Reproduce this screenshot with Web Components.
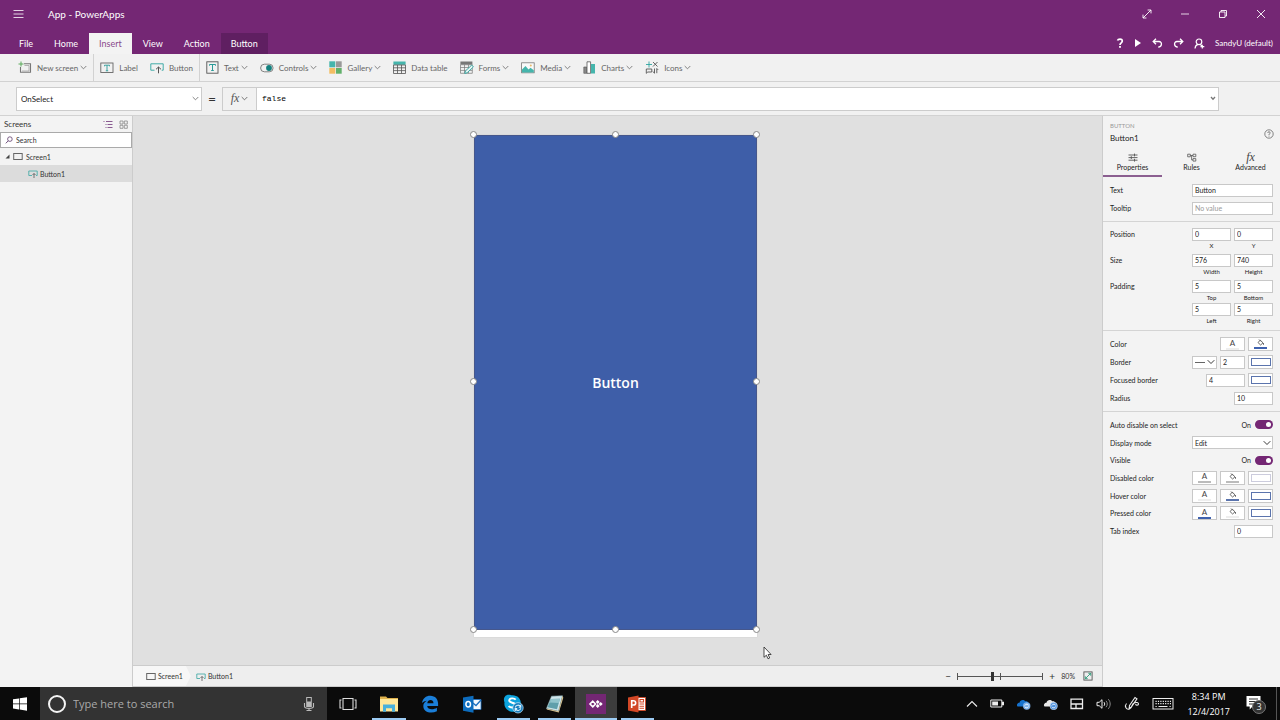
<!DOCTYPE html>
<html lang="en">
<head>
<meta charset="utf-8">
<title>App - PowerApps</title>
<style>
  html, body { margin: 0; height: 100%; }
  body { font-family: Lato, "Open Sans", sans-serif; font-size: 8px; color: #333; background: #f3f3f3; overflow: hidden; }
</style>
</head>
<body>
<power-studio></power-studio>
<script>
const base = `
  *, *::before, *::after { box-sizing: border-box; }
  button, input, select { font: inherit; color: inherit; margin: 0; border: 0; border-radius: 0; background: none; padding: 0; outline: 0; }
  button { display: flex; align-items: center; justify-content: center; }
  select { appearance: none; }
  a { color: inherit; text-decoration: none; display: flex; align-items: center; }
`;

function define(tag, css, html) {
  customElements.define(tag, class extends HTMLElement {
    connectedCallback() {
      if (this.shadowRoot) return;
      const root = this.attachShadow({ mode: 'open' });
      root.innerHTML = `<style>${base}${css}</style>${typeof html === 'function' ? html(this) : html}`;
    }
  });
}

/* name: [width, height, markup] */
const N = 'fill="none"';
const S = 'fill="none" stroke="currentColor"';
const icons = {
  menu: [11, 10, `<path ${S} stroke-width=".8" d="M.5 1.500h10M.5 5h10M.5 8.500h10"/>`],
  expand: [10, 10, `<path ${S} stroke-width=".9" d="M1 9l8-8M5.600 1H9v3.400M1 5.600V9h3.400"/>`],
  minimize: [10, 10, `<path ${S} stroke-width=".8" d="M1 5h8"/>`],
  restore: [10, 10, `<path ${S} stroke-width=".9" d="M1.500 3h5.500v5.500h-5.500zM3 3V1.500h5.500v5.500H7"/>`],
  close: [10, 10, `<path ${S} stroke-width=".9" d="M1 1l8 8M9 1l-8 8"/>`],
  help: [8, 10, `<path ${S} stroke-width="1.700" d="M1.500 2.400C2 .9 6.300.3 6.300 3 6.300 5 4 4.700 4 7"/><rect x="3.100" y="8" width="1.800" height="1.800" fill="currentColor"/>`],
  play: [8, 10, `<path fill="currentColor" d="M1 1l6 4-6 4z"/>`],
  undo: [11, 10, `<path ${S} stroke-width="1.300" d="M4 .8L1.200 3.500 4 6.200M1.400 3.500H7c3.400.2 3.400 5.300-.8 5.600"/>`],
  redo: [11, 10, `<path ${S} stroke-width="1.300" d="M7 .8l2.800 2.700L7 6.200M9.600 3.500H4C.6 3.700.6 8.800 4.800 9.100"/>`],
  user: [11, 11, `<circle ${S} stroke-width="1.200" cx="5" cy="3.800" r="2.800"/><path ${S} stroke-width="1.200" d="M1 10.500c.2-2.400 1.200-3.600 3-4.100M6.300 6.500l1.500 1.300M8.300 6.800v3.600M6.500 8.600h3.800"/>`],
  chev: [7, 5, `<path ${S} stroke-width=".8" d="M.7 1l2.800 2.800L6.300 1"/>`],
  chevBig: [8, 6, `<path ${S} stroke-width=".9" d="M.7 1.200L4 4.500l3.300-3.300"/>`],
  chevBold: [6, 5, `<path ${N} stroke="#777" stroke-width="1.300" d="M1 1l2 2.200L5 1"/>`],
  newScreen: [14, 13, `<path ${N} stroke="#777" stroke-width="1.100" d="M6 2.800h6.500v8.500H2.500V6"/><path ${N} stroke="#999" stroke-width=".7" d="M6.500 4.500h4.500v5.500H4"/><path ${N} stroke="#5aaa5a" d="M3 .5v5M.5 3h5"/>`],
  label: [14, 12, `<rect ${N} stroke="#666" stroke-width=".9" x=".8" y="1" width="12.200" height="9.500"/><path ${N} stroke="#2b9b98" stroke-width=".9" d="M4.500 4.300V3.200h5v1.100M7 3.200v5.600M5.800 8.800h2.400"/>`],
  button: [14, 12, `<path ${N} stroke="#2fa5a0" stroke-width=".9" d="M4.500 8.200H.8V1.800h12.400v6.400h-1.500"/><path ${N} stroke="#555" stroke-width="1" d="M8.500 11.300V5M6 7.300L8.500 5 11 7.300"/>`],
  text: [13, 13, `<rect ${N} stroke="#555" stroke-width=".9" x=".8" y=".8" width="11.200" height="11.400"/><path ${N} stroke="#2b9b98" d="M3.500 4.700V3.500h6v1.200M6.500 3.500v6M5.200 9.500h2.600"/>`],
  controls: [14, 10, `<rect ${N} stroke="#666" stroke-width=".8" x=".6" y="1.200" width="12.500" height="7.600" rx="3.800"/><circle cx="9" cy="5" r="2.900" fill="#12807e"/>`],
  gallery: [13, 13, `<path fill="#45b5ac" d="M.3.3h6v6h-6z"/><path fill="#999" d="M7 .3h5.700v6H7z"/><path fill="#f3bd62" d="M.3 7h6v5.700h-6z"/><path fill="#62b06a" d="M7 7h5.700v5.700H7z"/>`],
  table: [13, 13, `<path fill="#45b5ac" d="M.4.5h12.200v3.300H.4z"/><path ${N} stroke="#555" stroke-width=".8" d="M.5 4h12v8.500H.5zM.5 6.800h12M.5 9.600h12M4.500 4v8.500M8.500 4v8.500"/>`],
  forms: [14, 13, `<path fill="#777" d="M.4.5h12v3H.4z"/><path ${N} stroke="#777" stroke-width=".7" d="M.5 3.700h11.800v8.600H.5zM.5 6.500h11.800M.5 9.400h11.800M4.500 3.700v8.600M8.500 3.700v8.600"/><path fill="#e8f4f3" stroke="#2fa5a0" stroke-width=".9" d="M4.800 12.500l.7-2.600 6.200-5.800 1.700 1.800-6.200 5.800z"/>`],
  media: [14, 12, `<rect fill="#fafafa" stroke="#777" stroke-width=".8" x=".6" y=".8" width="12.600" height="10"/><path fill="#45b5ac" d="M1 10.500V7.500L4.500 4l3 3.500 2-1.700 3.300 2.500v2.200z"/><circle cx="9.800" cy="3.500" r="1" fill="#e9b96a"/>`],
  charts: [13, 13, `<path fill="#888" stroke="#555" stroke-width=".6" d="M.8 6h3v6.300h-3z"/><path fill="#fff" stroke="#555" stroke-width=".8" d="M4 .8h3.600v11.500H4z"/><path fill="#45b5ac" d="M8 3h4v9.500H8z"/>`],
  shapes: [14, 13, `<path ${N} stroke="#2fa5a0" stroke-width=".9" d="M4 .5v6M1 3.500h6"/><path ${N} stroke="#555" stroke-width=".9" d="M8 1l4.500 4.500M12.500 1L8 5.500M1.300 8h5.500v3h-4l-1.500 1.300zM9.500 7.500v4.700M7.800 10.500l1.700 1.700M11.800 12.200V7.500l1.400 1.400"/>`],
  list: [10, 9, `<path ${N} stroke="#7e4a86" stroke-width=".9" d="M3 1.500h6.500M4.500 4.500h5M4.500 7.500h5M.5 1.500h1M2.500 4.500h1M2.500 7.500h1"/>`],
  grid: [9, 9, `<path ${N} stroke="#888" stroke-width=".8" d="M1 1h3v3H1zM5.300 1h3v3h-3zM1 5.300h3v3H1zM5.300 5.300h3v3h-3z"/>`],
  search: [8, 8, `<circle ${N} stroke="#5d3a6b" stroke-width=".8" cx="4.900" cy="3.100" r="2.300"/><path ${N} stroke="#5d3a6b" stroke-width=".9" d="M3.200 4.900L.8 7.300"/>`],
  caret: [5, 5, `<path fill="#444" d="M4.500.5v4h-4z"/>`],
  screen: [10, 9, `<rect ${N} stroke="#666" x=".7" y="1.500" width="8.500" height="6"/>`],
  btnSmall: [10, 9, `<path ${N} stroke="#4aada8" stroke-width=".9" d="M4 6.500H.8V2h8.400v4.500H8"/><path ${N} stroke="#555" stroke-width=".8" d="M6 9V4.500M4.500 6L6 4.500 7.500 6"/>`],
  info: [10, 10, `<circle ${S} stroke-width=".7" cx="5" cy="5" r="4.200"/><path ${S} stroke-width=".8" d="M3.600 3.900c.2-1.500 2.800-1.300 2.600.1C6 5 5 4.700 5 5.900M5 6.700v.8"/>`],
  sliders: [10, 9, `<path ${S} stroke-width=".9" d="M.5 2h9M.5 4.600h9M.5 7.200h9M6.500.6v2.800M3.300 3.200V6M6.500 5.800v2.800"/>`],
  rules: [10, 9, `<path ${S} stroke-width=".8" d="M.7 1.200h2.600v2.600H.7zM6 1.200h2.800v2.500H6zM6 5.600h2.800v2.500H6zM3.300 2.500H6M4.600 2.500v4.400H6"/>`],
  fill: [9, 7, `<path ${S} stroke-width=".8" d="M2 3.500L4.300 1.200 7 3.800 4.600 6zM3 .5l1.800 1.800M7.500 4v1.800"/>`],
  fit: [10, 10, `<rect ${N} stroke="#555" stroke-width=".9" x=".9" y=".9" width="8.200" height="8.200"/><path ${N} stroke="#2b9b78" stroke-width=".9" d="M2.300 7.700l5.400-5.400M5.300 2.300h2.400v2.400M2.300 5.300v2.400h2.400"/>`],
  pointer: [9, 14, `<path fill="#fff" stroke="#222" stroke-width=".8" d="M1 1v10.300l2.400-2.100 1.600 3.600 1.700-.8-1.600-3.500h3z"/>`],
  windows: [16, 16, `<path fill="#fff" d="M1 3.300l6-.9v5.200H1zM7.700 2.300L15 1.200v6.400H7.700zM1 8.300h6v5.200l-6-.9zM7.700 8.300H15v6.400l-7.300-1.100z"/>`],
  ring: [20, 20, `<circle ${N} stroke="#f4f4f4" stroke-width="2" cx="10" cy="10" r="8"/>`],
  mic: [12, 16, `<rect ${N} stroke="#bbb" x="3.700" y="1.500" width="4.600" height="9"/><path fill="#bbb" d="M4 5.500h4v5H4z"/><path ${N} stroke="#bbb" stroke-width="1.100" d="M1.500 7v3.500c0 2.500 9 2.500 9 0V7M6 12.500v2.200M3.500 14.500h5"/>`],
  taskview: [18, 14, `<path ${N} stroke="#ddd" stroke-width="1.100" d="M4 1.500h10v11H4zM2.500 3H1v8h1.500M15.500 3H17v8h-1.500"/>`],
  folder: [20, 18, `<path fill="#dfb24d" d="M1 1.500h6l1.500 1.500H19v5H1z"/><path fill="#ffe79a" d="M1 4h18v12.500H1z"/><path fill="#48b0dc" d="M4 16.800V9.500h12v7.300h-3v-3.500H7v3.500z"/>`],
  edge: [18, 18, `<path fill="#1b7fd9" d="M1 8C1.600 3.300 5 .7 9.300.7c5 0 7.800 3.600 7.800 8V11H6.200c.2 4 6.300 4 9.700 1.800v3.400C10 19.200 2.300 17.200 2.300 10.900c0-2.300 1.400-4.100 3.500-5.200C3.800 5.900 2 6.700 1 8zm5.300.2h6.200C12.500 4 6.700 4.200 6.300 8.200z"/>`],
  outlook: [20, 18, `<path fill="#f4f8fc" stroke="#1c6fc0" stroke-width=".8" d="M9 4.500h10v10H9z"/><path ${N} stroke="#1c6fc0" stroke-width="1.300" d="M9 6.500l5 4L19 5"/><path fill="#0d6cbd" d="M1 2.500L11.500.7v17L1 15.800z"/><ellipse ${N} stroke="#fff" stroke-width="1.500" cx="6.200" cy="9.300" rx="2.300" ry="2.800"/>`],
  skype: [21, 20, `<path fill="#0da3dd" d="M5.500.7c2 0 2.600.6 4 .6 6 0 9.300 5 8 9.500 1.700 4.500-2 8.500-6.500 6.900C5 18.500.6 13.500 1.500 8.500-.2 4.500 2 .7 5.500.7z"/><path ${N} stroke="#fff" stroke-width="1.900" d="M12.700 5.600C11 3.700 6 4 6.200 6.700 6.500 9.300 12.300 8.200 12.500 11.200c.1 2.800-5.300 3-6.800.7"/><circle cx="15" cy="13.800" r="5.200" fill="#167dbd" stroke="#c7e5f6" stroke-width=".7"/><path ${N} stroke="#d9f0fb" stroke-width="1.100" d="M12.300 13.500c.4-3 4.300-3 5.200-.6M17.700 14.200c-.4 3-4.300 3-5.200.6M17.700 10.700v2.500h-2M12.200 17v-2.400h2"/>`],
  notepad: [20, 18, `<path fill="#cfe5ea" stroke="#86a9b1" stroke-width=".6" d="M6.500 1.200l11-.4-4 15.400L1.500 13.500z"/><path fill="#5f9fab" d="M6 4l9-.3-3 10.500-9.500-2z"/><path fill="#91c4cc" d="M6 4l9-.3-1.200 4.400-9-.6z"/><path fill="#d5c08f" d="M1.500 13.500l12 2.700.3 1.200-12-3zM17.500.8l.8 2-4.500 14.600-.3-1.200z"/>`],
  powerapps: [20, 20, `<path fill="#742774" d="M0 0h20v20H0z"/><path ${N} stroke="#fff" stroke-width="1.600" d="M6.800 7.200L9.500 10l-2.700 2.800L4 10z"/><path fill="#fff" d="M11.700 5.900l2 2-2 2-2-2zM11.700 10.100l2 2-2 2-2-2zM14.700 8l2 2-2 2-2-2z"/>`],
  powerpoint: [20, 18, `<path fill="#fff" stroke="#d24726" stroke-width=".9" d="M9 2.500h9.500v13H9z"/><path ${N} stroke="#d24726" stroke-width="1.100" d="M12.500 9h4.500M12.500 11.200h4.500M12.500 13.200h4.500M13 4.500h3.500v2.500H13z"/><path fill="#d24726" d="M1 2.500L11.500.6v17L1 15.600z"/><path ${N} stroke="#fff" stroke-width="1.600" d="M4.700 13V5.800h1.500c3.300 0 3.300 4.200 0 4.200H4.700"/>`],
  up: [12, 8, `<path ${S} stroke-width="1.100" d="M1 6.500l5-5 5 5"/>`],
  battery: [14, 9, `<path ${S} d="M.8 1h11v7h-11zM12.500 3h1v3h-1z"/><path fill="currentColor" d="M2.200 2.500H8v4H2.200z"/>`],
  cloudBlue: [15, 12, `<path fill="#1672cd" d="M1.500 8.500C0 6.500 2 4.500 3.500 4.700 4 2 7.500 1 9.300 3.300c2.700-.6 4.300 2 3.200 5.200z"/><circle cx="10.700" cy="8" r="3.700" fill="#7fb2ea"/><path ${N} stroke="#fff" stroke-width=".9" d="M8.800 7.500c1-1.800 3-1.500 3.800-.3M12.600 8.700c-1 1.600-3 1.300-3.800.1"/>`],
  cloudWhite: [15, 12, `<path fill="#e8e8e8" d="M1.500 8.500C0 6.500 2 4.500 3.500 4.700 4 2 7.500 1 9.300 3.300c2.700-.6 4.300 2 3.200 5.200z"/><circle cx="10.700" cy="8" r="3.700" fill="#4f93e0" stroke="#dfe9f5" stroke-width=".6"/><path ${N} stroke="#fff" stroke-width=".9" d="M8.800 7.500c1-1.800 3-1.500 3.800-.3M12.600 8.700c-1 1.600-3 1.300-3.800.1"/>`],
  network: [14, 12, `<path ${S} stroke-width="1.300" d="M1 1.200h11.500v9.300H1zM1 6h11.500M6 6v4.500"/>`],
  speaker: [16, 12, `<path ${S} stroke-width="1" d="M1 4.300h2.200L6 1.700v8.600L3.200 7.700H1zM8 4.200c.9 1 .9 2.600 0 3.600"/><path ${N} stroke="#999" stroke-width=".9" d="M10 2.800c1.700 1.900 1.700 4.500 0 6.400M12.300 1.200c2.500 2.800 2.500 6.800 0 9.600"/>`],
  pen: [16, 15, `<path ${S} stroke-width="1.100" d="M5.500 9.500l5.500-8 2 1.400-5.500 8-2.300 1zM2.500 7.500c-2.500 3 0 6.500 3 5.500s2-5 4.500-6 4.500-.5 4.500 1-2.500 1.500-3 .2"/>`],
  keyboard: [22, 13, `<rect ${S} x="1" y="1.500" width="20" height="10.500"/><path ${S} stroke-width="1.200" stroke-dasharray="1.200 1.200" d="M3.500 4.300h15.500M3.500 6.700h15.500"/><path ${S} stroke-width="1.200" d="M3.500 9.500h1.200M6.500 9.500h9M17.500 9.500h1.200"/>`],
  note: [15, 15, `<path fill="#fff" d="M.5 1h14v10.500H6.500l-2.800 3v-3H.5z"/><path ${N} stroke="#333" stroke-width="1" d="M3 4h9M3 6.500h9M3 9h6"/>`]
};
define('ui-icon', `:host { display: inline-flex; flex: none; } svg { display: block; }`, el => {
  const [w, h, markup] = icons[el.getAttribute('name')];
  return `<svg width="${w}" height="${h}" viewBox="0 0 ${w} ${h}" aria-hidden="true">${markup}</svg>`;
});

define('app-header', `
  :host { display: flex; flex-direction: column; background: #742774; color: #fff; height: 54px; flex: none; }
  .row { display: flex; justify-content: space-between; }
  .title { height: 27px; align-items: center; font-size: 10px; padding: 0 9px 0 13px; }
  .title div { display: flex; align-items: center; gap: 24px; }
  .title .win { gap: 18px; }
  .win button { width: 20px; height: 20px; }
  .tabs { height: 27px; align-items: flex-end; font-size: 9px; }
  nav { display: flex; gap: 1px; padding-left: 9px; }
  nav a { height: 21px; padding: 0 10px; }
  nav a.on { background: #f3f3f3; color: #8a4a8c; }
  nav a.ctx { background: #5f1f61; }
  .tools { display: flex; align-items: center; height: 22px; gap: 10px; padding-right: 7px; font-size: 8px; }
`, `
  <div class="row title">
    <div><button aria-label="Menu"><ui-icon name="menu"></ui-icon></button><span>App - PowerApps</span></div>
    <div class="win">
      <button aria-label="Full screen"><ui-icon name="expand"></ui-icon></button>
      <button aria-label="Minimize"><ui-icon name="minimize"></ui-icon></button>
      <button aria-label="Restore"><ui-icon name="restore"></ui-icon></button>
      <button aria-label="Close"><ui-icon name="close"></ui-icon></button>
    </div>
  </div>
  <div class="row tabs">
    <nav><a href="#file">File</a><a href="#home">Home</a><a href="#insert" class="on">Insert</a><a href="#view">View</a><a href="#action">Action</a><a href="#button" class="ctx">Button</a></nav>
    <div class="tools">
      <button aria-label="Help"><ui-icon name="help"></ui-icon></button>
      <button aria-label="Play"><ui-icon name="play"></ui-icon></button>
      <button aria-label="Undo"><ui-icon name="undo"></ui-icon></button>
      <button aria-label="Redo"><ui-icon name="redo"></ui-icon></button>
      <button aria-label="Share"><ui-icon name="user"></ui-icon></button>
      <span>SandyU (default)</span>
    </div>
  </div>`);

define('ribbon-item', `
  :host { display: flex; }
  button { gap: 5px; color: #666; }
  span { display: flex; align-items: center; gap: 2px; white-space: nowrap; }
`, el => `<button><ui-icon name="${el.getAttribute('icon')}"></ui-icon><span><slot></slot>${el.hasAttribute('menu') ? '<ui-icon name="chev"></ui-icon>' : ''}</span></button>`);

define('ribbon-bar', `
  :host { display: flex; height: 28px; flex: none; background: #f1f1f1; border-bottom: 1px solid #d2d2d2; }
  .group { display: flex; gap: 12px; padding: 0 6px; border-right: 1px solid #d2d2d2; }
  .group:first-of-type { padding-left: 18px; }
  .group:last-of-type { border: 0; }
`, `
  <div class="group"><ribbon-item icon="newScreen" menu>New screen</ribbon-item></div>
  <div class="group"><ribbon-item icon="label">Label</ribbon-item><ribbon-item icon="button">Button</ribbon-item></div>
  <div class="group">
    <ribbon-item icon="text" menu>Text</ribbon-item>
    <ribbon-item icon="controls" menu>Controls</ribbon-item>
    <ribbon-item icon="gallery" menu>Gallery</ribbon-item>
    <ribbon-item icon="table">Data table</ribbon-item>
    <ribbon-item icon="forms" menu>Forms</ribbon-item>
    <ribbon-item icon="media" menu>Media</ribbon-item>
    <ribbon-item icon="charts" menu>Charts</ribbon-item>
    <ribbon-item icon="shapes" menu>Icons</ribbon-item>
  </div>`);

define('formula-bar', `
  :host { display: flex; align-items: center; height: 34px; flex: none; background: #f1f1f1; border-bottom: 1px solid #d2d2d2; padding: 0 61px 0 16px; }
  .box { display: grid; align-items: center; height: 24px; background: #fff; border: 1px solid #ccc; }
  .box > * { grid-area: 1 / 1; }
  .box ui-icon { justify-self: end; margin-right: 2px; pointer-events: none; color: #666; }
  .prop { width: 186px; }
  select { height: 22px; padding-left: 4px; color: #222; }
  .eq { width: 20px; text-align: center; font-size: 14px; }
  .fx { width: 34px; height: 24px; border: 1px solid #ccc; border-right: 0; font: italic 12px "Liberation Serif", serif; color: #555; gap: 2px; }
  .formula { flex: 1; }
  input { height: 22px; padding-left: 5px; font-family: "Liberation Mono", monospace; color: #000; }
`, `
  <div class="box prop"><select aria-label="Property"><option>OnSelect</option></select><ui-icon name="chev"></ui-icon></div>
  <span class="eq">=</span>
  <button class="fx">fx<ui-icon name="chev"></ui-icon></button>
  <div class="box formula"><input aria-label="Formula" value="false"><ui-icon name="chevBold"></ui-icon></div>`);

define('tree-panel', `
  :host { display: flex; flex-direction: column; width: 133px; flex: none; background: #f3f3f3; border-right: 1px solid #ccc; font-size: 7px; }
  header { display: flex; align-items: center; height: 16px; padding: 0 4px; font-size: 8px; gap: 6px; }
  header span { flex: 1; }
  label { display: flex; align-items: center; gap: 3px; height: 16px; padding-left: 4px; background: #fff; border: 1px solid #aaa; }
  input { flex: 1; min-width: 0; }
  input::placeholder { color: #333; opacity: 1; }
  a { height: 17px; gap: 3px; padding-left: 5px; color: #333; }
  a.child { background: #dcdcdc; padding-left: 28px; gap: 2px; }
`, `
  <header><span>Screens</span><button aria-label="List view"><ui-icon name="list"></ui-icon></button><button aria-label="Thumbnail view"><ui-icon name="grid"></ui-icon></button></header>
  <label><ui-icon name="search"></ui-icon><input type="search" aria-label="Search" placeholder="Search"></label>
  <a href="#screen1"><ui-icon name="caret"></ui-icon><ui-icon name="screen"></ui-icon>Screen1</a>
  <a href="#button1" class="child"><ui-icon name="btnSmall"></ui-icon>Button1</a>`);

define('design-canvas', `
  :host { display: flex; justify-content: center; flex: 1; min-height: 0; background: #e0e0e0; padding: 19px 4px 28px 0; }
  .screen { position: relative; height: 100%; aspect-ratio: 640 / 1136; background: #fff; box-shadow: 0 0 1px #bbb; }
  .control { position: relative; width: 100%; height: 98.6%; background: #3e5ea8; color: #fff; font: 600 14px "Open Sans", sans-serif; box-shadow: inset 0 0 0 1px #46578c; }
  i { position: absolute; width: 7px; height: 7px; margin: -4px; border-radius: 50%; background: #fff; border: 1px solid #888; }
  .t { top: 0; } .m { top: 50%; } .b { top: 100%; }
  .l { left: 0; } .c { left: 50%; } .r { left: 100%; }
  .pointer { position: absolute; left: 289px; bottom: -23px; }
`, `
  <div class="screen">
    <button class="control">Button<i class="t l"></i><i class="t c"></i><i class="t r"></i><i class="m l"></i><i class="m r"></i><i class="b l"></i><i class="b c"></i><i class="b r"></i></button>
    <ui-icon class="pointer" name="pointer"></ui-icon>
  </div>`);

define('status-bar', `
  :host { display: flex; justify-content: space-between; height: 22px; flex: none; background: #eee; border-top: 1px solid #ccc; border-bottom: 1px solid #ccc; font-size: 7px; padding-right: 9px; }
  nav, .zoom { display: flex; align-items: center; }
  nav { gap: 5px; }
  nav a { gap: 2px; height: 100%; }
  nav a.first { background: #f7f7f7; padding: 0 8px 0 13px; clip-path: polygon(0 0, calc(100% - 5px) 0, 100% 50%, calc(100% - 5px) 100%, 0 100%); }
  .zoom { gap: 5px; }
  .zoom button { font-size: 10px; width: 8px; }
  .zoom button:last-child { width: 10px; }
  .scale { position: relative; display: flex; width: 86px; height: 9px; background: linear-gradient(#555, #555) 0 4px / 100% 1px no-repeat, linear-gradient(#555, #555) 0 1px / 1px 7px no-repeat, linear-gradient(#555, #555) 100% 1px / 1px 7px no-repeat, linear-gradient(#555, #555) 50% 1px / 1px 7px no-repeat; }
  input { appearance: none; width: 100%; height: 9px; }
  input::-webkit-slider-thumb { appearance: none; width: 3px; height: 9px; background: #333; }
  output { margin-right: 3px; }
`, `
  <nav><a href="#screen1" class="first"><ui-icon name="screen"></ui-icon>Screen1</a><a href="#button1"><ui-icon name="btnSmall"></ui-icon>Button1</a></nav>
  <div class="zoom"><button aria-label="Zoom out">−</button><span class="scale"><input type="range" aria-label="Zoom" value="41"></span><button aria-label="Zoom in">+</button><output>80%</output><button aria-label="Fit"><ui-icon name="fit"></ui-icon></button></div>`);

define('prop-row', `
  :host { display: flex; justify-content: space-between; align-items: center; height: 18px; }
  div { display: flex; align-items: center; gap: 3px; }
`, el => `<span>${el.getAttribute('label')}</span><div><slot></slot></div>`);

define('prop-field', `
  :host { display: block; width: 39px; }
  :host([wide]) { width: 81px; }
  :host([slim]) { width: 25px; }
  label { display: block; }
  input { display: block; width: 100%; height: 13px; background: #fff; border: 1px solid #c8c8c8; padding: 0 2px; color: #222; }
  input::placeholder { color: #999; opacity: 1; }
  span { display: block; height: 9px; line-height: 10px; font-size: 6px; text-align: center; }
`, el => {
  const a = n => el.getAttribute(n) || '';
  return `<label><input aria-label="${a('name')}" value="${a('value')}" placeholder="${a('hint')}">${a('caption') ? `<span>${a('caption')}</span>` : ''}</label>`;
});

define('prop-switch', `
  label { display: flex; align-items: center; gap: 4px; }
  input { appearance: none; display: flex; align-items: center; justify-content: flex-end; width: 18px; height: 9px; border-radius: 5px; background: #742774; padding: 0 2px; }
  input::before { content: ""; width: 5px; height: 5px; border-radius: 50%; background: #fff; }
`, el => `<label>On<input type="checkbox" checked aria-label="${el.getAttribute('name')}"></label>`);

define('prop-swatch', `
  :host { display: block; --swatch: var(--c, #5b74ad); }
  button { flex-direction: column; width: 25px; height: 14px; background: #fff; border: 1px solid #c8c8c8; gap: 1px; line-height: 8px; font-size: 8px; color: #444; }
  u { width: 13px; height: 2px; background: var(--swatch); }
  b { width: 20px; height: 8px; border: 1px solid var(--swatch); }
`, el => {
  const kind = el.getAttribute('kind');
  const face = kind === 'text' ? 'A<u></u>' : kind === 'fill' ? '<ui-icon name="fill"></ui-icon><u></u>' : '<b></b>';
  return `<button aria-label="${kind}">${face}</button>`;
});

define('prop-select', `
  :host { display: grid; align-items: center; width: 81px; height: 13px; background: #fff; border: 1px solid #c8c8c8; }
  :host([line]) { width: 25px; }
  select, ui-icon, hr { grid-area: 1 / 1; }
  select { height: 11px; padding-left: 2px; }
  ui-icon { justify-self: end; margin-right: 1px; pointer-events: none; }
  hr { width: 10px; margin: 0 0 0 2px; border: 0; border-top: 1px solid #666; }
`, el => `<select aria-label="${el.getAttribute('name')}"><option>${el.getAttribute('value') || ''}</option></select>${el.hasAttribute('line') ? '<hr>' : ''}<ui-icon name="chevBig"></ui-icon>`);

define('property-panel', `
  :host { display: block; width: 178px; flex: none; background: #f3f3f3; border-left: 1px solid #ccc; font-size: 7px; color: #222; }
  header { display: flex; justify-content: space-between; align-items: center; height: 34px; padding: 0 6px 0 7px; }
  header small { display: block; font-size: 6px; line-height: 10px; color: #999; }
  header strong { display: block; font-size: 8px; font-weight: 400; line-height: 14px; }
  header button { padding-top: 2px; color: #555; }
  nav { display: grid; grid-template-columns: repeat(3, 1fr); height: 27px; }
  nav a { flex-direction: column; justify-content: flex-end; gap: 1px; padding-bottom: 3px; border-bottom: 2px solid transparent; line-height: 9px; }
  nav ui-icon { color: #555; }
  nav a.on { border-color: #8b5f90; }
  nav em { font: italic 12px/10px "Liberation Serif", serif; color: #444; }
  section { padding: 4px 7px; border-bottom: 1px solid #d4d4d4; }
  .pairs { display: flex; flex-direction: column; gap: 4px; padding: 6px 7px 5px; }
  .pairs prop-row { height: auto; align-items: flex-start; line-height: 13px; }
  .quad { display: grid; grid-template-columns: auto auto; gap: 1px 3px; }
  .last { display: grid; grid-auto-rows: 1fr; height: 132px; border: 0; }
  .last prop-row { height: auto; }
  .none { --c: #eee; } .grey { --c: #bbb; } .pale { --c: #ccd; } .navy { --c: #3f62ae; }
`, `
  <header><div><small>BUTTON</small><strong>Button1</strong></div><button aria-label="Help"><ui-icon name="info"></ui-icon></button></header>
  <nav><a href="#properties" class="on"><ui-icon name="sliders"></ui-icon>Properties</a><a href="#rules"><ui-icon name="rules"></ui-icon>Rules</a><a href="#advanced"><em>fx</em>Advanced</a></nav>
  <section>
    <prop-row label="Text"><prop-field wide name="Text" value="Button"></prop-field></prop-row>
    <prop-row label="Tooltip"><prop-field wide name="Tooltip" hint="No value"></prop-field></prop-row>
  </section>
  <section class="pairs">
    <prop-row label="Position"><prop-field name="X" value="0" caption="X"></prop-field><prop-field name="Y" value="0" caption="Y"></prop-field></prop-row>
    <prop-row label="Size"><prop-field name="Width" value="576" caption="Width"></prop-field><prop-field name="Height" value="740" caption="Height"></prop-field></prop-row>
    <prop-row label="Padding"><div class="quad"><prop-field name="Top" value="5" caption="Top"></prop-field><prop-field name="Bottom" value="5" caption="Bottom"></prop-field><prop-field name="Left" value="5" caption="Left"></prop-field><prop-field name="Right" value="5" caption="Right"></prop-field></div></prop-row>
  </section>
  <section>
    <prop-row label="Color"><prop-swatch class="none" kind="text"></prop-swatch><prop-swatch class="navy" kind="fill"></prop-swatch></prop-row>
    <prop-row label="Border"><prop-select line name="Border style"></prop-select><prop-field slim name="Border" value="2"></prop-field><prop-swatch kind="border"></prop-swatch></prop-row>
    <prop-row label="Focused border"><prop-field name="Focused border" value="4"></prop-field><prop-swatch kind="border"></prop-swatch></prop-row>
    <prop-row label="Radius"><prop-field name="Radius" value="10"></prop-field></prop-row>
  </section>
  <section class="last">
    <prop-row label="Auto disable on select"><prop-switch name="Auto disable on select"></prop-switch></prop-row>
    <prop-row label="Display mode"><prop-select name="Display mode" value="Edit"></prop-select></prop-row>
    <prop-row label="Visible"><prop-switch name="Visible"></prop-switch></prop-row>
    <prop-row label="Disabled color"><prop-swatch class="grey" kind="text"></prop-swatch><prop-swatch class="grey" kind="fill"></prop-swatch><prop-swatch class="pale" kind="border"></prop-swatch></prop-row>
    <prop-row label="Hover color"><prop-swatch class="none" kind="text"></prop-swatch><prop-swatch kind="fill"></prop-swatch><prop-swatch kind="border"></prop-swatch></prop-row>
    <prop-row label="Pressed color"><prop-swatch class="navy" kind="text"></prop-swatch><prop-swatch class="none" kind="fill"></prop-swatch><prop-swatch kind="border"></prop-swatch></prop-row>
    <prop-row label="Tab index"><prop-field name="Tab index" value="0"></prop-field></prop-row>
  </section>`);

define('task-bar', `
  :host { display: flex; justify-content: space-between; height: 33px; flex: none; background: #0b0b0b; color: #eee; font-family: "Open Sans", sans-serif; }
  div { display: flex; align-items: center; }
  .start { width: 40px; height: 33px; }
  label { display: flex; align-items: center; width: 287px; height: 33px; padding: 0 12px 0 7px; gap: 6px; background: #333; font-size: 12px; }
  input { flex: 1; min-width: 0; font-size: 11px; }
  input::placeholder { color: #aaa; opacity: 1; }
  .apps { display: grid; grid-template-columns: repeat(8, 1fr); width: 331px; }
  .apps button { position: relative; height: 33px; }
  .apps .run::after { content: ""; position: absolute; left: 4px; right: 4px; bottom: 0; height: 2px; background: #9ccbf3; }
  .apps .on { background: #3c3c3c; }
  .apps .on::after { left: 0; right: 0; }
  .tray { gap: 12px; padding-right: 3px; }
  .tray time { display: block; font-size: 9px; line-height: 15px; text-align: center; color: #fff; padding: 0 4px 0 1px; }
  .tray .note { position: relative; padding-bottom: 2px; margin-right: 3px; }
  .badge { position: absolute; left: 6px; top: 5px; width: 14px; height: 14px; border-radius: 50%; background: #333; border: 1px solid #777; font-size: 9px; line-height: 12px; text-align: center; }
  .edge { width: 1px; height: 33px; background: #555; }
`, `
  <div>
    <button class="start" aria-label="Start"><ui-icon name="windows"></ui-icon></button>
    <label><ui-icon name="ring"></ui-icon><input type="search" aria-label="Search Windows" placeholder="Type here to search"><ui-icon name="mic"></ui-icon></label>
    <div class="apps">
      <button aria-label="Task view"><ui-icon name="taskview"></ui-icon></button>
      <button class="run" aria-label="File Explorer"><ui-icon name="folder"></ui-icon></button>
      <button aria-label="Edge"><ui-icon name="edge"></ui-icon></button>
      <button aria-label="Outlook"><ui-icon name="outlook"></ui-icon></button>
      <button class="run" aria-label="Skype"><ui-icon name="skype"></ui-icon></button>
      <button class="run" aria-label="Notepad"><ui-icon name="notepad"></ui-icon></button>
      <button class="run on" aria-label="PowerApps"><ui-icon name="powerapps"></ui-icon></button>
      <button class="run" aria-label="PowerPoint"><ui-icon name="powerpoint"></ui-icon></button>
    </div>
  </div>
  <div class="tray">
    <ui-icon name="up"></ui-icon><ui-icon name="battery"></ui-icon><ui-icon name="cloudBlue"></ui-icon><ui-icon name="cloudWhite"></ui-icon><ui-icon name="network"></ui-icon><ui-icon name="speaker"></ui-icon><ui-icon name="pen"></ui-icon><ui-icon name="keyboard"></ui-icon>
    <time>8:34 PM<br>12/4/2017</time>
    <button class="note" aria-label="Notifications"><ui-icon name="note"></ui-icon><span class="badge">3</span></button>
    <span class="edge"></span>
  </div>`);

define('power-studio', `
  :host { display: flex; flex-direction: column; height: 100vh; }
  .body { display: flex; flex: 1; min-height: 0; }
  main { display: flex; flex-direction: column; flex: 1; min-width: 0; }
`, `
  <app-header></app-header>
  <ribbon-bar></ribbon-bar>
  <formula-bar></formula-bar>
  <div class="body">
    <tree-panel></tree-panel>
    <main><design-canvas></design-canvas><status-bar></status-bar></main>
    <property-panel></property-panel>
  </div>
  <task-bar></task-bar>`);
</script>
</body>
</html>
